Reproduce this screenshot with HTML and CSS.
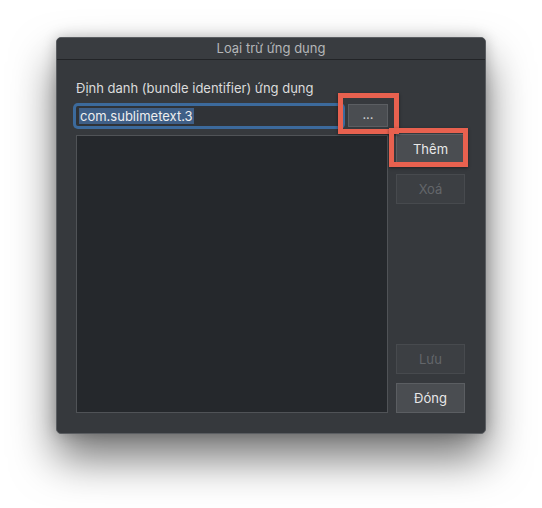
FILE: index.html
```html
<!DOCTYPE html>
<html lang="vi">
<head>
<meta charset="utf-8">
<link rel="stylesheet" href="styles.css">
</head>
<body>
<div class="dialog">
  <div class="titlebar">Loại trừ ứng dụng</div>
  <div class="content">
    <div class="label">Định danh (bundle identifier) ứng dụng</div>
    <div class="grid">
      <div class="inputrow">
        <div class="field"><span class="sel">com.sublimetext.3</span></div>
        <div class="btn small">...</div>
      </div>
      <div></div>
      <div class="list"></div>
      <div class="side">
        <div class="btn">Thêm</div>
        <div class="btn disabled">Xoá</div>
        <div class="spacer"></div>
        <div class="btn disabled">Lưu</div>
        <div class="btn">Đóng</div>
      </div>
    </div>
  </div>
  <div class="mark mark-browse"></div>
  <div class="mark mark-add"></div>
</div>
</body>
</html>
```

FILE: styles.css
```css
html {
  margin: 0;
  height: 100%;
  background: #ffffff;
}
body {
  margin: 0;
  min-height: 508px;
  box-sizing: border-box;
  padding: 37px 0 0 56px;
  font-family: "Inter", "Noto Sans", "DejaVu Sans", sans-serif;
  font-size: 13px;
  background: #ffffff;
}
.dialog {
  position: relative;
  width: 430px;
  height: 397px;
  box-sizing: border-box;
  border: 1px solid #5a5d61;
  border-radius: 5px;
  background: #36393d;
  box-shadow: 0 24px 44px rgba(0, 0, 0, 0.55), 0 0 14px rgba(0, 0, 0, 0.22);
}
.titlebar {
  height: 21px;
  line-height: 21px;
  text-align: center;
  color: #b4b6b8;
  background: #393c40;
  border-bottom: 1px solid #222427;
  border-radius: 4px 4px 0 0;
}
.content {
  padding: 20px 20px 0 19px;
}
.label {
  color: #dcdcdc;
  line-height: 16px;
  height: 16px;
}
.grid {
  display: grid;
  grid-template-columns: 312px 69px;
  column-gap: 8px;
  grid-template-rows: auto 278px;
  row-gap: 8px;
  margin-top: 8px;
}
.inputrow {
  display: flex;
  align-items: center;
  gap: 6px;
  height: 23px;
}
.field {
  width: 266px;
  height: 20px;
  box-sizing: border-box;
  background: #303337;
  box-shadow: 0 0 0 3px #3c6a9c;
  border-radius: 2px;
  padding: 2px 0 0 3px;
}
.sel {
  display: inline-block;
  background: #3f5f87;
  color: #eeeeee;
  line-height: 16px;
  padding: 0 1px;
}
.btn {
  height: 30px;
  box-sizing: border-box;
  border: 1px solid #5b5e62;
  background: #4a4d51;
  color: #e8e8e8;
  display: flex;
  align-items: center;
  justify-content: center;
}
.btn.small {
  width: 40px;
  height: 23px;
  color: #d0d0d0;
  padding-bottom: 4px;
}
.btn.disabled {
  background: #3c3f43;
  border-color: #474a4e;
  color: #63666a;
}
.list {
  background: #25282c;
  border: 1px solid #505357;
}
.side {
  display: flex;
  flex-direction: column;
  gap: 10px;
  margin-top: -1px;
}
.spacer {
  flex: 1;
}
.side .btn:last-child {
  margin-top: -1px;
}
.mark {
  position: absolute;
  box-sizing: border-box;
  border: 5px solid #e8614f;
  box-shadow: 0 1px 3px rgba(0, 0, 0, 0.45);
}
.mark-browse {
  left: 281px;
  top: 55px;
  width: 61px;
  height: 41px;
}
.mark-add {
  left: 332px;
  top: 90px;
  width: 79px;
  height: 39px;
}
```
